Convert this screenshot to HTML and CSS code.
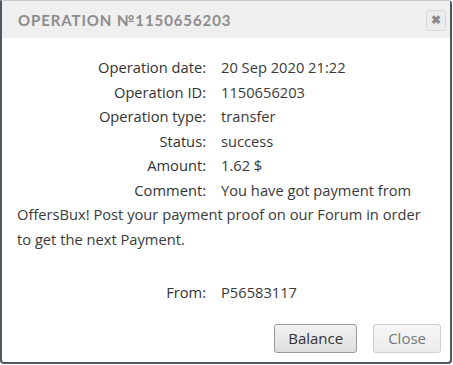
FILE: index.html
```html
<!DOCTYPE html>
<html lang="en">
<head>
    <meta charset="UTF-8">
    <title>Operation</title>
    <link rel="stylesheet" href="styles.css">
</head>
<body>
    <div class="dialog">
        <div class="dialog-header">
            <span class="dialog-title">Operation №1150656203</span>
            <button class="close-x" title="close">&#10006;</button>
        </div>
        <div class="dialog-body">
            <div class="row"><span class="label">Operation date:</span>20 Sep 2020 21:22</div>
            <div class="row"><span class="label">Operation ID:</span>1150656203</div>
            <div class="row"><span class="label">Operation type:</span>transfer</div>
            <div class="row"><span class="label">Status:</span>success</div>
            <div class="row"><span class="label">Amount:</span>1.62 $</div>
            <div class="row"><span class="label">Comment:</span>You have got payment from OffersBux! Post your payment proof on our Forum in order to get the next Payment.</div>
            <div class="row from"><span class="label">From:</span>P56583117</div>
        </div>
        <div class="dialog-footer">
            <button class="btn">Balance</button>
            <button class="btn btn-muted">Close</button>
        </div>
    </div>
</body>
</html>
```

FILE: styles.css
```css
body {
    margin: 0;
    background: #fff;
    font-family: "Open Sans", Arial, sans-serif;
}
.dialog {
    width: 452px;
    height: 364px;
    border: 1px solid #c8c8c8;
    border-left: 2px solid #4d5863;
    border-right: 2px solid #4d5863;
    border-bottom: 2px solid #4d5863;
    border-radius: 0 4px 4px 4px;
    box-sizing: border-box;
    display: flex;
    flex-direction: column;
    background: #fff;
}
.dialog-header {
    background: #efefef;
    height: 37px;
    display: flex;
    align-items: center;
    justify-content: space-between;
    padding: 0 4px 0 16px;
    box-sizing: border-box;
}
.dialog-title {
    font-family: Lato, sans-serif;
    font-weight: bold;
    text-transform: uppercase;
    color: #8c8c8c;
    font-size: 15px;
    letter-spacing: 0.9px;
}
.close-x {
    width: 20px;
    height: 21px;
    padding: 0;
    border: 1px solid #d6d6d6;
    border-radius: 3px;
    background: #ececec;
    color: #888;
    font-size: 12px;
    font-weight: bold;
    line-height: 19px;
    margin-top: 1px;
}
.dialog-body {
    padding: 17px 20px 0 15px;
    font-size: 14.7px;
    line-height: 24.5px;
    color: #3a3a3a;
}
.label {
    display: inline-block;
    width: 189px;
    text-align: right;
    margin-right: 15px;
    color: #333;
}
.from {
    margin-top: 29px;
}
.dialog-footer {
    display: flex;
    justify-content: flex-end;
    gap: 16px;
    padding: 19px 9px 0 0;
}
.btn {
    font-family: "Open Sans", Arial, sans-serif;
    font-size: 15px;
    color: #333;
    height: 29px;
    padding: 0 13px;
    border: 1px solid #9a9a9a;
    border-radius: 3px;
    background: linear-gradient(#f2f2f2, #dedede);
}
.btn-muted {
    color: #777;
    border-color: #d0d0d0;
    background: linear-gradient(#f6f6f6, #ebebeb);
    padding: 0 14px;
}
```
